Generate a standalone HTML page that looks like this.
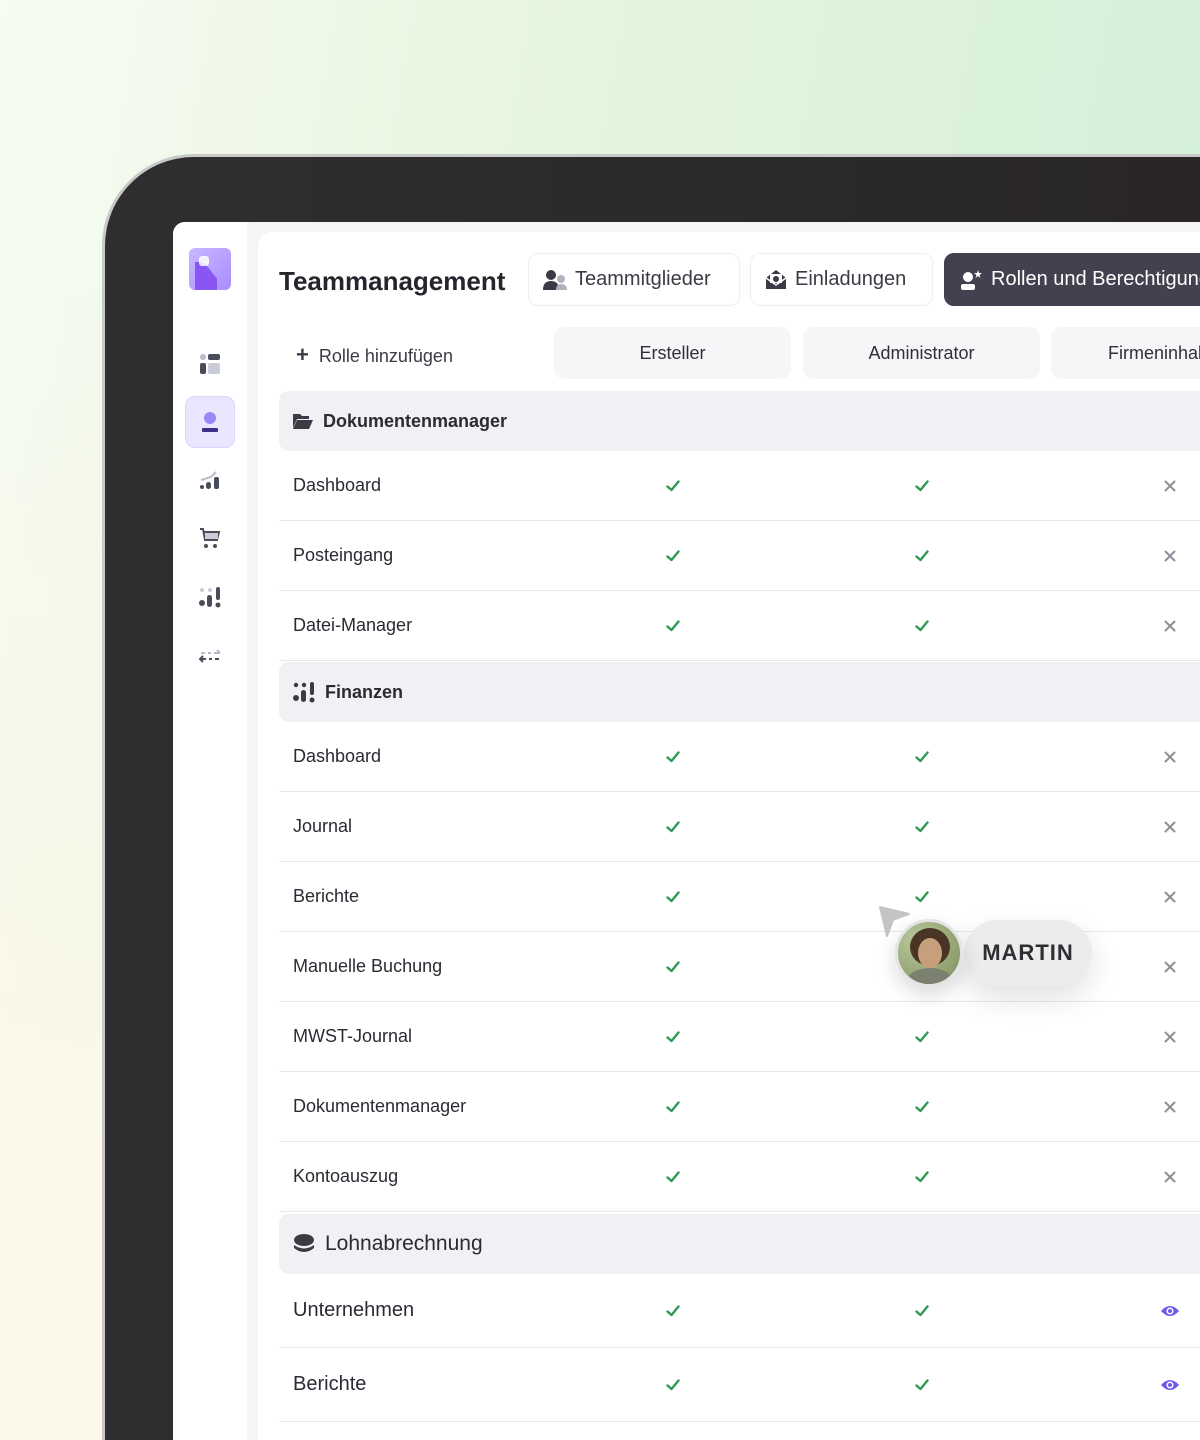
<!DOCTYPE html>
<html style="width:1200px;height:1440px;overflow:hidden"><head><meta charset="utf-8"><style>
*{margin:0;padding:0;box-sizing:border-box}
body{width:1200px;height:1440px;overflow:hidden;position:relative;font-family:"Liberation Sans",sans-serif;color:#2a2b33;
background:linear-gradient(100deg,#f7fbf3 0%,#e6f5dd 40%,#cfeed8 100%)}
.bgb{position:absolute;left:0;top:0;width:1200px;height:1440px;background:linear-gradient(180deg,rgba(255,255,255,0) 20%,#fbf8e8 80%)}
.bezel{position:absolute;left:102px;top:154px;width:1098px;height:1286px;border-radius:92px 0 0 0;background:linear-gradient(90deg,#2e2e31,#2a2626);border:3px solid #c9c9c9;border-right:none;border-bottom:none}
.screen{position:absolute;left:173px;top:222px;width:1027px;height:1218px;border-radius:12px 0 0 0;background:#f4f5f7;overflow:hidden}
.side{position:absolute;left:0;top:0;width:74px;height:100%;background:#fff}
.main{position:absolute;left:85px;top:10px;width:942px;height:1208px;background:#fff;border-radius:14px 0 0 0;overflow:hidden}
.abs{position:absolute}
.title{left:21px;top:34px;font-size:26px;font-weight:bold;color:#25262d}
.tab{top:21px;height:53px;border:1px solid #eceef1;border-radius:10px;font-size:20px;display:flex;align-items:center;padding-left:14px;gap:8px;color:#3a3b44;white-space:nowrap}
.tab.dark{background:#41414f;color:#fff;border-color:#41414f}
.col{top:95px;height:52px;width:237px;background:#f5f6f8;border-radius:10px;font-size:18px;display:flex;align-items:center;justify-content:center;color:#2f3038}
.grp{left:21px;width:1000px;height:60px;background:#f0f1f4;border-radius:10px;display:flex;align-items:center;padding-left:14px;gap:10px;font-size:18px;font-weight:bold;color:#2a2b33}
.row{left:21px;width:1000px;height:70px;border-bottom:1px solid #e6e7ea;font-size:18px;display:flex;align-items:center;padding-left:14px;color:#2a2b33}
.c{position:absolute;top:50%;transform:translate(-50%,-50%);display:block}
</style></head><body>
<svg width="0" height="0" style="position:absolute"><defs>
<symbol id="ok" viewBox="0 0 14 12"><path d="M1.5 6.5 L5.5 10 L12.5 1.5" stroke="#2f9a52" stroke-width="2.4" fill="none" stroke-linecap="round" stroke-linejoin="round"/></symbol>
<symbol id="x" viewBox="0 0 12 12"><path d="M1.5 1.5 L10.5 10.5 M10.5 1.5 L1.5 10.5" stroke="#8e9098" stroke-width="2" stroke-linecap="round"/></symbol>
<symbol id="eye" viewBox="0 0 20 14"><path d="M1 7 Q10 -3 19 7 Q10 17 1 7Z" fill="#6b5cf0"/><circle cx="10" cy="7" r="3.5" fill="#fff"/><circle cx="10" cy="7" r="2" fill="#6b5cf0"/></symbol>
</defs></svg>
<div class="bgb"></div>
<div class="bezel"></div>
<div class="screen">
 <div class="side">
  <div class="abs" style="left:16px;top:26px;width:42px;height:42px;border-radius:6px;background:linear-gradient(135deg,#c8b8ff,#a98cff);overflow:hidden">
   <div class="abs" style="left:6px;top:14px;width:22px;height:28px;background:#8a55f5;clip-path:polygon(0 0,40% 0,100% 60%,100% 100%,0 100%)"></div>
   <div class="abs" style="left:10px;top:8px;width:10px;height:10px;border-radius:3px;background:#fff;opacity:.85"></div>
  </div>
  <svg class="abs" style="left:26px;top:131px" width="22" height="22" viewBox="0 0 22 22"><circle cx="4" cy="4" r="3" fill="#b8bcc8"/><rect x="9" y="1" width="12" height="6" rx="2" fill="#4a4c5a"/><rect x="1" y="10" width="6" height="11" rx="2" fill="#4a4c5a"/><rect x="9" y="10" width="12" height="11" rx="2" fill="#c9ccd6"/></svg>
  <div class="abs" style="left:12px;top:174px;width:50px;height:52px;border-radius:10px;background:#ebe6ff;border:1px solid #ddd5ff"></div>
  <svg class="abs" style="left:26px;top:189px" width="22" height="22" viewBox="0 0 22 22"><circle cx="11" cy="7" r="6" fill="#9b86f5"/><rect x="3" y="17" width="16" height="4" rx="1" fill="#3a2f8a"/></svg>
  <svg class="abs" style="left:26px;top:247px" width="22" height="22" viewBox="0 0 22 22"><circle cx="3" cy="18" r="2" fill="#4a4c5a"/><rect x="7" y="13" width="5" height="7" rx="2.5" fill="#4a4c5a"/><rect x="15" y="8" width="5" height="12" rx="2" fill="#4a4c5a"/><path d="M2 11 L12 8 L17 3" stroke="#b8bcc8" stroke-width="2" fill="none"/></svg>
  <svg class="abs" style="left:26px;top:305px" width="22" height="22" viewBox="0 0 22 22"><path d="M1 2 H4 L6 13 H18 L20 5 H5" stroke="#4a4c5a" stroke-width="2" fill="none"/><rect x="6" y="6" width="13" height="6" fill="#c9ccd6"/><circle cx="7" cy="19" r="2" fill="#4a4c5a"/><circle cx="16" cy="19" r="2" fill="#4a4c5a"/></svg>
  <svg class="abs" style="left:26px;top:364px" width="22" height="22" viewBox="0 0 22 22"><circle cx="3" cy="4" r="2" fill="#c9ccd6"/><circle cx="11" cy="4" r="2" fill="#c9ccd6"/><rect x="17" y="1" width="4" height="13" rx="2" fill="#4a4c5a"/><circle cx="3" cy="17" r="3" fill="#4a4c5a"/><rect x="8" y="9" width="5" height="12" rx="2.5" fill="#4a4c5a"/><circle cx="19" cy="19" r="2.5" fill="#4a4c5a"/></svg>
  <svg class="abs" style="left:26px;top:423px" width="22" height="22" viewBox="0 0 22 22"><path d="M2 8 H6 M9 8 H12 M15 8 H21 M18 5 L21 8" stroke="#b8bcc8" stroke-width="2" fill="none"/><path d="M1 14 H7 M4 11 L1 14 L4 17 M10 14 H13 M16 14 H20" stroke="#4a4c5a" stroke-width="2" fill="none"/></svg>
 </div>
 <div class="main">
  <div class="abs title">Teammanagement</div>
  <div class="abs tab" style="left:270px;width:212px"><svg width="24" height="22" viewBox="0 0 24 22"><circle cx="8" cy="6" r="5" fill="#3a3b44"/><path d="M0 21 Q0 12 8 12 Q16 12 16 21Z" fill="#3a3b44"/><circle cx="18" cy="10" r="4" fill="#b0b3bd"/><path d="M13 21 Q13 15 18 15 Q24 15 24 21Z" fill="#b0b3bd"/></svg>Teammitglieder</div>
  <div class="abs tab" style="left:492px;width:183px"><svg width="22" height="22" viewBox="0 0 22 22"><path d="M1 9 L11 1 L21 9 V20 H1Z" fill="#3a3b44"/><rect x="5" y="5" width="12" height="9" fill="#fff"/><circle cx="11" cy="10" r="3" fill="#3a3b44"/><path d="M1 9 L11 16 L21 9" stroke="#fff" stroke-width="1.5" fill="none"/></svg>Einladungen</div>
  <div class="abs tab dark" style="left:686px;width:330px"><svg width="24" height="22" viewBox="0 0 24 22"><circle cx="9" cy="8" r="5" fill="#fff"/><rect x="2" y="15" width="14" height="6" rx="2" fill="#fff"/><path d="M19 1 L20 4 L23 4 L20.5 6 L21.5 9 L19 7 L16.5 9 L17.5 6 L15 4 L18 4Z" fill="#fff"/></svg>Rollen und Berechtigungen</div>
  <div class="abs" style="left:38px;top:110px;font-size:18px;color:#3a3b44"><b style="font-size:22px;margin-right:10px">+</b>Rolle hinzufügen</div>
  <div class="abs col" style="left:296px">Ersteller</div>
  <div class="abs col" style="left:545px">Administrator</div>
  <div class="abs col" style="left:793px;justify-content:flex-start;padding-left:57px;white-space:nowrap;overflow:hidden">Firmeninhaber</div>

  <div class="abs grp" style="top:159px"><svg width="20" height="18" viewBox="0 0 20 18"><path d="M0 2 H7 L9 4 H16 V7 H4 L0 16Z" fill="#3a3b44"/><path d="M4 8 H20 L16 17 H0Z" fill="#3a3b44"/></svg>Dokumentenmanager</div>
  <div class="abs row" style="top:219px">Dashboard<svg class="c" style="left:394px" width="14" height="12"><use href="#ok"/></svg><svg class="c" style="left:643px" width="14" height="12"><use href="#ok"/></svg><svg class="c" style="left:891px" width="12" height="12"><use href="#x"/></svg></div>
  <div class="abs row" style="top:289px">Posteingang<svg class="c" style="left:394px" width="14" height="12"><use href="#ok"/></svg><svg class="c" style="left:643px" width="14" height="12"><use href="#ok"/></svg><svg class="c" style="left:891px" width="12" height="12"><use href="#x"/></svg></div>
  <div class="abs row" style="top:359px">Datei-Manager<svg class="c" style="left:394px" width="14" height="12"><use href="#ok"/></svg><svg class="c" style="left:643px" width="14" height="12"><use href="#ok"/></svg><svg class="c" style="left:891px" width="12" height="12"><use href="#x"/></svg></div>

  <div class="abs grp" style="top:430px"><svg width="22" height="22" viewBox="0 0 22 22"><circle cx="3" cy="4" r="2.2" fill="#3a3b44"/><circle cx="11" cy="4" r="2.2" fill="#3a3b44"/><rect x="17" y="1" width="4" height="13" rx="2" fill="#3a3b44"/><circle cx="3" cy="17" r="3" fill="#3a3b44"/><rect x="8" y="9" width="5" height="12" rx="2.5" fill="#3a3b44"/><circle cx="19" cy="19" r="2.5" fill="#3a3b44"/></svg>Finanzen</div>
  <div class="abs row" style="top:490px">Dashboard<svg class="c" style="left:394px" width="14" height="12"><use href="#ok"/></svg><svg class="c" style="left:643px" width="14" height="12"><use href="#ok"/></svg><svg class="c" style="left:891px" width="12" height="12"><use href="#x"/></svg></div>
  <div class="abs row" style="top:560px">Journal<svg class="c" style="left:394px" width="14" height="12"><use href="#ok"/></svg><svg class="c" style="left:643px" width="14" height="12"><use href="#ok"/></svg><svg class="c" style="left:891px" width="12" height="12"><use href="#x"/></svg></div>
  <div class="abs row" style="top:630px">Berichte<svg class="c" style="left:394px" width="14" height="12"><use href="#ok"/></svg><svg class="c" style="left:643px" width="14" height="12"><use href="#ok"/></svg><svg class="c" style="left:891px" width="12" height="12"><use href="#x"/></svg></div>
  <div class="abs row" style="top:700px">Manuelle Buchung<svg class="c" style="left:394px" width="14" height="12"><use href="#ok"/></svg><svg class="c" style="left:891px" width="12" height="12"><use href="#x"/></svg></div>
  <div class="abs row" style="top:770px">MWST-Journal<svg class="c" style="left:394px" width="14" height="12"><use href="#ok"/></svg><svg class="c" style="left:643px" width="14" height="12"><use href="#ok"/></svg><svg class="c" style="left:891px" width="12" height="12"><use href="#x"/></svg></div>
  <div class="abs row" style="top:840px">Dokumentenmanager<svg class="c" style="left:394px" width="14" height="12"><use href="#ok"/></svg><svg class="c" style="left:643px" width="14" height="12"><use href="#ok"/></svg><svg class="c" style="left:891px" width="12" height="12"><use href="#x"/></svg></div>
  <div class="abs row" style="top:910px">Kontoauszug<svg class="c" style="left:394px" width="14" height="12"><use href="#ok"/></svg><svg class="c" style="left:643px" width="14" height="12"><use href="#ok"/></svg><svg class="c" style="left:891px" width="12" height="12"><use href="#x"/></svg></div>

  <div class="abs grp" style="top:982px;font-size:21px;font-weight:normal;color:#2a2b33"><svg width="22" height="20" viewBox="0 0 22 20"><ellipse cx="11" cy="6" rx="10" ry="6" fill="#3a3b44"/><path d="M1 11 Q11 18 21 11 V14 Q11 22 1 14Z" fill="#3a3b44"/></svg>Lohnabrechnung</div>
  <div class="abs row" style="top:1042px;height:74px;font-size:20px">Unternehmen<svg class="c" style="left:394px" width="14" height="12"><use href="#ok"/></svg><svg class="c" style="left:643px" width="14" height="12"><use href="#ok"/></svg><svg class="c" style="left:891px" width="20" height="14"><use href="#eye"/></svg></div>
  <div class="abs row" style="top:1116px;height:74px;font-size:20px">Berichte<svg class="c" style="left:394px" width="14" height="12"><use href="#ok"/></svg><svg class="c" style="left:643px" width="14" height="12"><use href="#ok"/></svg><svg class="c" style="left:891px" width="20" height="14"><use href="#eye"/></svg></div>
 </div>
</div>
<svg class="abs" style="left:879px;top:906px" width="32" height="32" viewBox="0 0 32 32"><path d="M1 1 L30 8 L14 14 L8 30Z" fill="#c4c4c6" stroke="#c4c4c6" stroke-linejoin="round" stroke-width="2"/></svg>
<div class="abs" style="left:964px;top:920px;width:128px;height:66px;border-radius:33px;background:#ececed;box-shadow:0 12px 30px rgba(0,0,0,.12);display:flex;align-items:center;justify-content:center;font-size:22px;font-weight:bold;color:#2e2f33;letter-spacing:1px">MARTIN</div>
<div class="abs" style="left:895px;top:919px;width:68px;height:68px;border-radius:50%;overflow:hidden;background:radial-gradient(circle at 30% 30%,#b9c79a,#7e8f5c);border:3px solid #e4e4e4;box-shadow:0 8px 20px rgba(0,0,0,.15)">
 <div class="abs" style="left:12px;top:6px;width:40px;height:38px;border-radius:50%;background:#4a3424"></div>
 <div class="abs" style="left:20px;top:16px;width:24px;height:30px;border-radius:50%;background:#c79f7c"></div>
 <div class="abs" style="left:8px;top:46px;width:48px;height:30px;border-radius:50% 50% 0 0;background:#7c816f"></div>
</div>
</body></html>
